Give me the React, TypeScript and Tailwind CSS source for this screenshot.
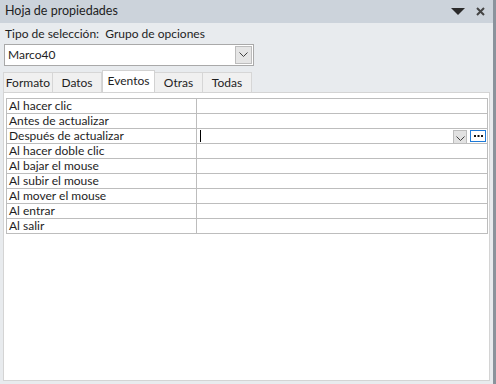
const rows = [
  'Al hacer clic',
  'Antes de actualizar',
  'Después de actualizar',
  'Al hacer doble clic',
  'Al bajar el mouse',
  'Al subir el mouse',
  'Al mover el mouse',
  'Al entrar',
  'Al salir',
]

const tabs = ['Formato', 'Datos', 'Eventos', 'Otras', 'Todas']
const tabWidths = ['w-[50px]', 'w-[49px]', 'w-[53px]', 'w-[48px]', 'w-[49px]']

function Chevron({ className }: { className?: string }) {
  return (
    <svg width="9" height="6" viewBox="0 0 9 6" className={className}>
      <path d="M0.5 0.5 L4.5 4.5 L8.5 0.5" fill="none" stroke="#404040" strokeWidth="1" />
    </svg>
  )
}

export default function App() {
  return (
    <div className="flex w-[496px] h-[384px] overflow-hidden text-[12px] text-[#1e1e1e]" style={{ fontFamily: 'Lato, "Liberation Sans", sans-serif' }}>
      <div className="flex flex-col w-[493px] bg-[#e8ebee]">
        <div className="flex items-center h-[23px] bg-[#ccd3db] pl-[5px] pr-[8px]">
          <span className="flex-1 leading-none text-[12.5px]">Hoja de propiedades</span>
          <svg width="14" height="8" viewBox="0 0 14 8" className="mr-[11px]">
            <path d="M0 0 H14 L7 7 Z" fill="#2b2b2b" />
          </svg>
          <svg width="9" height="9" viewBox="0 0 9 9">
            <path d="M1 1 L8 8 M8 1 L1 8" stroke="#444" strokeWidth="2" />
          </svg>
        </div>

        <div className="flex flex-col flex-1 pl-[3px] pr-[3px] pb-[3px]">
          <div className="h-[21px] pl-[2px] pt-[3px] leading-[16px]">Tipo de selección:&nbsp; Grupo de opciones</div>

          <div className="flex items-center h-[22px] w-[250px] ml-[1px] bg-white border border-[#a9a9a9]">
            <span className="flex-1 pl-[3px] leading-none">Marco40</span>
            <div className="flex items-center justify-center w-[17px] h-[18px] mr-[1px] bg-[#e5e5e5] border border-[#bcbcbc]">
              <Chevron />
            </div>
          </div>

          <div className="flex items-end h-[26px]">
            {tabs.map((t, i) =>
              t === 'Eventos' ? (
                <div key={t} className={`${tabWidths[i]} h-[22px] flex items-start justify-center pt-[2px] bg-white border border-b-0 border-[#d2d2d2] leading-[16px]`}>
                  {t}
                </div>
              ) : (
                <div key={t} className={`${tabWidths[i]} h-[20px] flex items-center justify-center bg-[#f0f0f0] border border-b-0 border-l-0 first:border-l border-[#d6d6d6] leading-none`}>
                  {t}
                </div>
              )
            )}
          </div>

          <div className="flex-1 bg-white border border-[#d4d4d4] pt-[5px] pl-[2px] pr-[1px]">
            <div className="border-t border-[#bdbdbd] w-[482px]">
              {rows.map((r, i) => (
                <div key={r} className="flex h-[15px] border-b border-[#bdbdbd]">
                  <div className="flex items-center w-[191px] border-l border-r border-[#bdbdbd] pl-[2px] leading-[14px] whitespace-nowrap">{r}</div>
                  <div className="flex flex-1 items-center border-r border-[#bdbdbd]">
                    {i === 2 && (
                      <>
                        <div className="w-[1px] h-[12px] bg-black ml-[3px]" />
                        <div className="flex-1" />
                        <div className="flex items-end justify-center w-[14px] h-[14px] mt-[1px] bg-[#e2e2e2] border border-[#bdbdbd] pb-[1px]">
                          <Chevron />
                        </div>
                        <div className="flex items-center justify-center w-[16px] h-[12px] ml-[3px] mr-[1px] bg-white border border-[#1e7ad8]">
                          <svg width="9" height="2" viewBox="0 0 9 2">
                            <rect x="0" y="0" width="2" height="2" fill="#111" />
                            <rect x="3.5" y="0" width="2" height="2" fill="#111" />
                            <rect x="7" y="0" width="2" height="2" fill="#111" />
                          </svg>
                        </div>
                      </>
                    )}
                  </div>
                </div>
              ))}
            </div>
          </div>
        </div>
      </div>
      <div className="w-[3px] bg-[#8a939c]" />
    </div>
  )
}
